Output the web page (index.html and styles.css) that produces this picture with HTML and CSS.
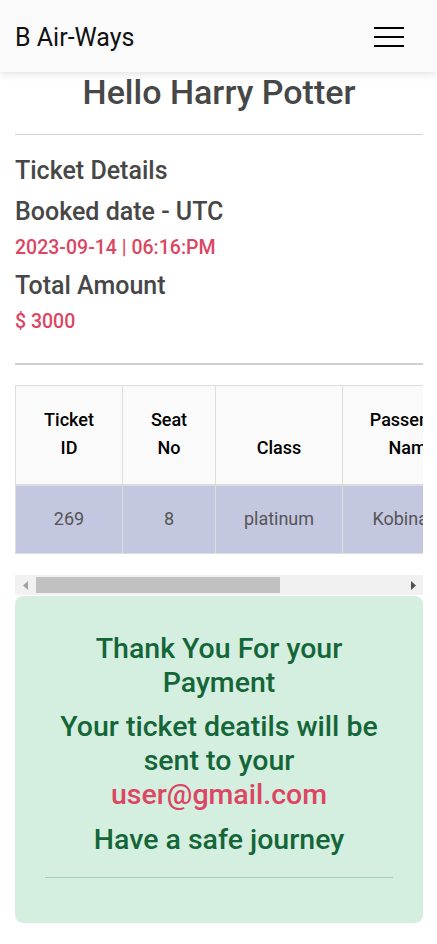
FILE: index.html
```html
<!DOCTYPE html>
<html>
<head>
<meta charset="utf-8">
<link rel="stylesheet" href="styles.css">
</head>
<body>
<nav class="navbar">
  <span class="brand">B Air-Ways</span>
  <span class="toggler">
    <svg width="30" height="22" viewBox="0 0 30 22"><path d="M0 2H30M0 11H30M0 20H30" stroke="#000" stroke-width="2"/></svg>
  </span>
</nav>
<main class="container">
  <h1 class="hello">Hello Harry Potter</h1>
  <hr class="rule">
  <section class="details">
    <h3 class="label">Ticket Details</h3>
    <h3 class="label">Booked date - UTC</h3>
    <p class="value">2023-09-14 | 06:16:PM</p>
    <h3 class="label">Total Amount</h3>
    <p class="value">$ 3000</p>
  </section>
  <hr class="rule thick">
  <div class="table-wrap">
    <table class="tickets">
      <thead>
        <tr>
          <th class="c1">Ticket ID</th>
          <th class="c2">Seat No</th>
          <th class="c3">Class</th>
          <th class="c4">Passenger Name</th>
          <th class="c5">Flight No</th>
        </tr>
      </thead>
      <tbody>
        <tr>
          <td>269</td>
          <td>8</td>
          <td>platinum</td>
          <td>Kobina Jo</td>
          <td>BA-204</td>
        </tr>
      </tbody>
    </table>
  </div>
  <div class="scrollbar">
    <span class="sb-btn"><svg width="6" height="9" viewBox="0 0 6 9"><path d="M5 0V9L0 4.5Z" fill="#a3a3a3"/></svg></span>
    <span class="sb-track"><span class="sb-thumb"></span></span>
    <span class="sb-btn"><svg width="6" height="9" viewBox="0 0 6 9"><path d="M1 0V9L6 4.5Z" fill="#505050"/></svg></span>
  </div>
  <div class="alert">
    <h2 class="msg">Thank You For your Payment</h2>
    <h2 class="msg">Your ticket deatils will be sent to your <span class="email">user@gmail.com</span></h2>
    <h2 class="msg last">Have a safe journey</h2>
    <hr class="alert-rule">
  </div>
</main>
</body>
</html>
```
FILE: styles.css
```css
* { box-sizing: border-box; }
html, body { margin: 0; padding: 0; }
body {
  font-family: Roboto, "Noto Sans", Arial, sans-serif;
  background: #fff;
  color: #212529;
}
.navbar {
  height: 72px;
  background: #fafafa;
  box-shadow: 0 2px 8px rgba(0,0,0,0.12);
  display: flex;
  align-items: center;
  justify-content: space-between;
  padding: 0 33px 0 15px;
  position: relative;
  z-index: 2;
}
.brand {
  font-size: 25px;
  color: #111;
  line-height: 1;
  margin-top: 2px;
}
.toggler { display: flex; margin-top: 2px; }
.toggler svg { display: block; }
.container { padding: 0 14px 0 15px; }
.hello {
  margin: 0;
  text-align: center;
  font-size: 34px;
  font-weight: 500;
  color: #474747;
  line-height: 40px;
}
.rule {
  border: 0;
  border-top: 1px solid #d0d0d0;
  margin: 22px 0 0;
}
.rule.thick { border-top: 2px solid #d0d0d0; margin-top: 0; }
.details { padding: 21px 0 18px; }
.label {
  margin: 0;
  font-size: 25px;
  font-weight: 500;
  color: #474747;
  line-height: 30px;
}
.label + .label { margin-top: 11px; }
.value {
  margin: 10px 0 12px;
  font-size: 19.5px;
  font-weight: 500;
  color: #dc4663;
  line-height: 22px;
}
.table-wrap {
  margin-top: 20px;
  overflow: hidden;
}
.tickets {
  border-collapse: collapse;
  table-layout: fixed;
  width: 612px;
  margin-bottom: 21px;
}
.c1 { width: 107px; }
.c2 { width: 93px; }
.c3 { width: 127px; }
.c4 { width: 140px; }
.c5 { width: 145px; }
.tickets th, .tickets td {
  border: 1px solid #dedede;
  text-align: center;
  font-size: 18px;
  line-height: 28px;
}
.tickets th {
  background: #fafafa;
  color: #000;
  font-weight: 500;
    vertical-align: bottom;
  padding: 20px 22px 22px;
  border-bottom: 2px solid #dcdcdc;
}
.tickets td {
  background: #c3c7df;
  color: #555;
  padding: 19px 8px 20px;
  white-space: nowrap;
}
.scrollbar {
  display: flex;
  height: 20px;
  background: #f1f1f1;
}
.sb-btn {
  width: 21px;
  flex: none;
  display: flex;
  align-items: center;
  justify-content: center;
}
.sb-btn svg { display: block; }
.sb-track {
  flex: 1;
  padding: 2px 0 2px;
  display: flex;
}
.sb-thumb {
  width: 244px;
  background: #c1c1c1;
}
.alert {
  margin-top: 1px;
  background: #d4efdf;
  border-radius: 8px;
  padding: 36px 30px 45px;
  text-align: center;
  margin-bottom: 22px;
}
.msg {
  margin: 0 0 10px;
  font-size: 28.5px;
  font-weight: 500;
  line-height: 34px;
  color: #146639;
}
.msg.last { margin: 11px 0 0; }
.email { color: #dc4663; }
.alert-rule {
  border: 0;
  border-top: 1px solid #a8cdb7;
  margin: 20px 0 0;
}
```
